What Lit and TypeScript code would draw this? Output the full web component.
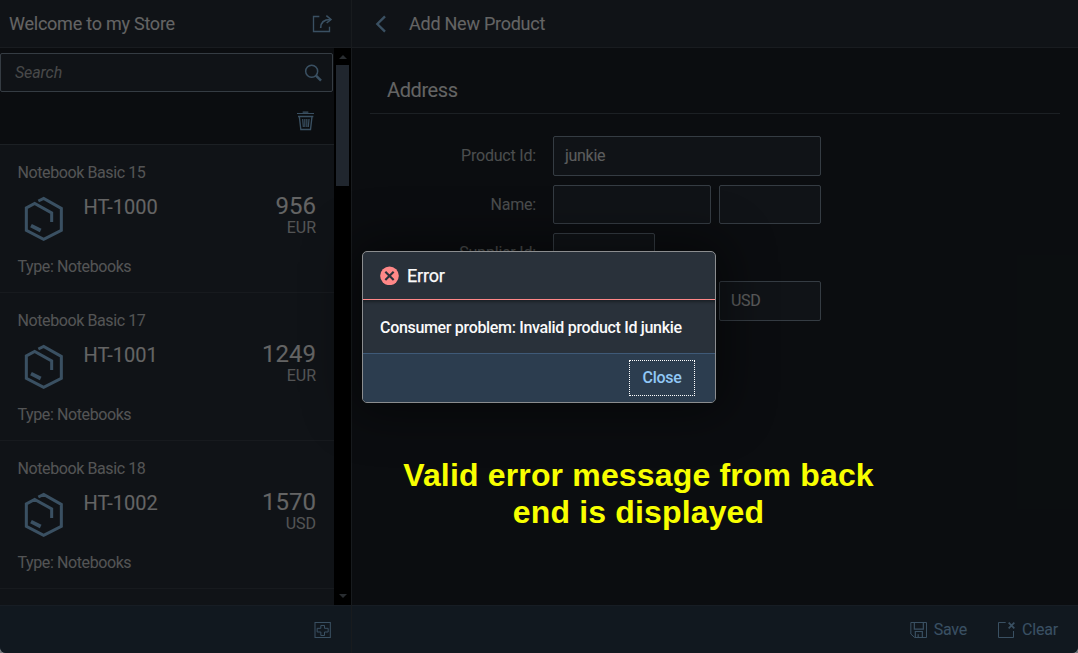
import { LitElement, html, css, svg } from "lit";
import { customElement } from "lit/decorators.js";

interface Product {
  name: string;
  id: string;
  price: string;
  currency: string;
}

const products: Product[] = [
  { name: "Notebook Basic 15", id: "HT-1000", price: "956", currency: "EUR" },
  { name: "Notebook Basic 17", id: "HT-1001", price: "1249", currency: "EUR" },
  { name: "Notebook Basic 18", id: "HT-1002", price: "1570", currency: "USD" },
];

const icon = (cls: string, w: number, h: number, box: string, body: unknown) =>
  html`<svg class="icon ${cls}" width=${w} height=${h} viewBox=${box}>${body}</svg>`;

const shareIcon = icon("share", 21, 19, "936 42 63 57", svg`
  <path d="M958 49.500H940.500V94.500H988.500V80" stroke-width="4"/>
  <path d="M962 84C962 68 972 58.500 991 58.500" stroke-width="5"/>
  <path d="M979 47L993 58.500L980 69" stroke-width="4.500"/>`);
const searchIcon = icon("search-glyph", 18, 18, "912 192 54 54", svg`
  <circle cx="935" cy="214" r="18" stroke-width="4.500"/>
  <path d="M948 227L963 242" stroke-width="7.500"/>`);
const trashIcon = icon("trash", 19, 20, "888 333 57 60", svg`
  <path d="M891 340.500H942M908 336.500H925" stroke-width="3.500"/>
  <path d="M894 349.500H940M898 350L902.500 388.500H931.500L936 350" stroke-width="4"/>
  <path d="M908 357L910 381M914.500 357V381M920.500 357V381M927 357L925 381" stroke-width="3.500"/>`);
const addIcon = icon("add", 17, 18, "942 543 51 54", svg`
  <rect x="945" y="547.500" width="46" height="45" stroke-width="3"/>
  <path d="M962.500 556.500H973.500V565H984.500V576H973.500V586.500H962.500V576H951.500V565H962.500Z" stroke-width="3"/>`);
const backIcon = icon("back", 11, 18, "75 45 33 54", svg`
  <path d="M105 49L82 72L105 95" stroke-width="7"/>`);
const saveIcon = icon("save", 18, 18, "90 93 54 54", svg`
  <path d="M92.500 97.500H139.500V142.500H104L92.500 132Z" stroke-width="3"/>
  <path d="M103 97V117.500H130V97M106 142V124.500H127V142M114.500 142V132.500" stroke-width="3.500"/>`);
const clearIcon = icon("clear", 19, 18, "351 93 57 54", svg`
  <path d="M377 97.500H355.500V142.500H400.500V123" stroke-width="3"/>
  <path d="M386 98L403 115M403 98L386 115" stroke-width="5"/>`);
const productIcon = icon("product", 40, 46, "72 153 120 138", svg`
  <path d="M115 168L131 160.500L184 190V256L131 283L79 256V189L104 175.500L155 203.500V231" stroke-width="9"/>
  <path d="M93 242L122 256.500" stroke-width="11"/>`);
const errorIcon = icon("error", 19, 19, "90 123 57 57", svg`
  <circle class="disc" cx="118.500" cy="152.500" r="28"/>
  <path class="cross" d="M106 140.500L131 165M131 140.500L106 165" stroke-width="6.500"/>`);

const shared = css`
  * { box-sizing: border-box; }
  .icon { display: block; fill: none; stroke: #91c8f6; flex: none; }
`;

@customElement("store-master")
class StoreMaster extends LitElement {
  static styles = [shared, css`
    :host { display: flex; flex-direction: column; width: 352px; border-right: 1px solid #3c444d; }
    .head { height: 48px; display: flex; align-items: center; justify-content: space-between;
      padding: 0 18px 0 9px; background: #29313a; border-bottom: 1px solid #3f4851; }
    .title { font-size: 18px; letter-spacing: -0.24px; }
    .body { flex: 1; display: flex; min-height: 0; }
    .list { width: 334px; display: flex; flex-direction: column; overflow: hidden; }
    .search { margin-top: 5px; height: 39px; width: 333px; flex: none; display: flex; align-items: center;
      justify-content: space-between; padding: 0 10px 0 14px; background: #29313a;
      border: 1px solid #8696a9; border-radius: 2px; }
    .hint { font-style: italic; color: #b5b7b9; letter-spacing: -0.1px; padding-top: 1px; }
    .tools { height: 53px; flex: none; display: flex; justify-content: flex-end;
      padding: 19px 19px 0 0; border-bottom: 1px solid #48515b; }
    .item { height: 148px; flex: none; background: #29313a; border-bottom: 1px solid #3a434d;
      padding: 18px 18px 0 17.5px; display: flex; flex-direction: column; }
    .line { line-height: 20px; color: #d0d2d4; letter-spacing: -0.4px; }
    .row { height: 74px; display: flex; }
    .product { margin: 13px 0 0 6.5px; }
    .id { margin: 12px 0 0 19.5px; font-size: 20px; line-height: 24px; flex: 1; }
    .amount { display: flex; flex-direction: column; align-items: flex-end; padding-top: 10px; }
    .price { font-size: 24px; line-height: 26px; }
    .cur { line-height: 17px; color: #d0d2d4; }
    .rest { flex: 1; background: #29313a; }
    .bar { width: 17px; background: #000; display: flex; flex-direction: column; align-items: center; padding: 7px 0; }
    .up, .down { border: 4px solid transparent; }
    .up { border-top: 0; border-bottom-color: #66707c; }
    .down { border-bottom: 0; border-top-color: #66707c; margin-top: auto; }
    .thumb { width: 13px; height: 121px; margin-top: 6px; background: #505f73; }
    .foot { height: 48px; display: flex; justify-content: flex-end; padding: 15px 20px 0 0;
      background: #2c3d4f; border-top: 1px solid #3a495a; }
  `];

  render() {
    return html`
      <div class="head"><span class="title">Welcome to my Store</span>${shareIcon}</div>
      <div class="body">
        <div class="list">
          <div class="search"><span class="hint">Search</span>${searchIcon}</div>
          <div class="tools">${trashIcon}</div>
          ${products.map((p) => html`
            <div class="item">
              <div class="line">${p.name}</div>
              <div class="row">
                ${productIcon}
                <div class="id">${p.id}</div>
                <div class="amount"><span class="price">${p.price}</span><span class="cur">${p.currency}</span></div>
              </div>
              <div class="line">Type: Notebooks</div>
            </div>`)}
          <div class="rest"></div>
        </div>
        <div class="bar"><div class="up"></div><div class="thumb"></div><div class="down"></div></div>
      </div>
      <div class="foot">${addIcon}</div>`;
  }
}

@customElement("product-form")
class ProductForm extends LitElement {
  static styles = [shared, css`
    :host { display: flex; flex-direction: column; flex: 1; min-width: 0; }
    .head { height: 48px; display: flex; align-items: center; gap: 23px; padding-left: 23px;
      background: #29313a; border-bottom: 1px solid #3f4851; }
    .title { font-size: 18px; letter-spacing: -0.25px; }
    .body { flex: 1; padding: 24px 18px 0; }
    .section { height: 42px; padding-left: 17px; font-size: 20px; line-height: 36px; letter-spacing: -0.4px;
      border-bottom: 1px solid #48515b; }
    .form { display: grid; grid-template-columns: 166px 158px 102px; column-gap: 8px; padding-top: 22px;
      grid-template-rows: 49px 48px 48px 40px; }
    .label { text-align: right; line-height: 40px; color: #bcc0c3; letter-spacing: -0.2px; }
    .fields { grid-column: 2 / 4; display: flex; gap: 8px; padding-left: 9px; width: 277px; }
    .field { height: 40px; line-height: 38px; padding-left: 11px; background: #29313a; border: 1px solid #8696a9;
      border-radius: 2px; color: #e4e6e8; letter-spacing: -0.3px; }
    .short { height: 39px; }
    .full { width: 268px; } .mid { width: 158px; } .small { width: 102px; }
    .foot { height: 48px; display: flex; justify-content: flex-end; padding: 14px 20px 0 0; gap: 30px;
      background: #2c3d4f; border-top: 1px solid #3a495a; }
    .action { display: flex; gap: 6px; line-height: 20px; height: 20px; color: #91c8f6; letter-spacing: -0.2px; }
    .action .icon { margin-top: 1px; }
  `];

  render() {
    return html`
      <div class="head">${backIcon}<span class="title">Add New Product</span></div>
      <div class="body">
        <div class="section">Address</div>
        <div class="form">
          <div class="label">Product Id:</div>
          <div class="fields"><div class="field full">junkie</div></div>
          <div class="label">Name:</div>
          <div class="fields"><div class="field mid short"></div><div class="field small short"></div></div>
          <div class="label">Supplier Id:</div>
          <div class="fields"><div class="field small"></div></div>
          <div class="label"></div>
          <div class="fields"><div class="field mid"></div><div class="field small">USD</div></div>
        </div>
      </div>
      <div class="foot">
        <div class="action">${saveIcon}<span>Save</span></div>
        <div class="action">${clearIcon}<span>Clear</span></div>
      </div>`;
  }
}

@customElement("error-dialog")
class ErrorDialog extends LitElement {
  static styles = [shared, css`
    :host { display: flex; flex-direction: column; width: 354px; height: 152px; background: #29313a;
      border: 1px solid #8b8d8f; border-radius: 5px; overflow: hidden; box-sizing: border-box;
      box-shadow: 0 0 50px 10px rgba(0, 0, 0, 0.45); color: #fafafa; }
    .head { height: 48px; display: flex; align-items: center; gap: 8px; padding-left: 17px;
      border-bottom: 1px solid #ff8888; font-size: 18px; flex: none; letter-spacing: -0.2px; }
    .head span { -webkit-text-stroke: 0.25px #fafafa; }
    .disc { fill: #ff8888; stroke: none; }
    .cross { stroke: #29313a; }
    .text { height: 53px; flex: none; padding-left: 17px; line-height: 55px; font-weight: 500; letter-spacing: -0.32px;
      box-shadow: inset 0 3px 3px -1px rgba(0, 0, 0, 0.35); }
    .foot { flex: 1; padding: 6px 20px 0 0; display: flex; justify-content: flex-end;
      background: #2c3d4f; border-top: 1px solid #3f5a78; }
    .close { width: 66px; height: 36px; line-height: 34px; text-align: center; border: 1px dotted #fff;
      color: #91c8f6; font-weight: 500; letter-spacing: -0.3px; }
  `];

  render() {
    return html`
      <div class="head">${errorIcon}<span>Error</span></div>
      <div class="text">Consumer problem: Invalid product Id junkie</div>
      <div class="foot"><div class="close">Close</div></div>`;
  }
}

@customElement("app-root")
class AppRoot extends LitElement {
  static styles = [shared, css`
    :host { display: block; position: relative; width: 1078px; height: 653px; overflow: hidden;
      background: #77797d; font: 16px/20px Roboto, "Liberation Sans", sans-serif; color: #fafafa; }
    .page { display: flex; height: 653px; background: #1c2228; border-radius: 0 0 6px 6px; overflow: hidden; }
    .dim { position: absolute; inset: 0; background: rgba(0, 0, 0, 0.6); border-radius: 0 0 6px 6px; }
    .dialog { position: absolute; left: 362px; top: 251px; }
    .caption { position: absolute; left: 388px; top: 457px; width: 501px; text-align: center;
      font: bold 32px/37px "Liberation Sans", Arial, sans-serif; letter-spacing: 0.16px; color: #f8ff00; }
  `];

  render() {
    return html`
      <div class="page"><store-master></store-master><product-form></product-form></div>
      <div class="dim"></div>
      <error-dialog class="dialog"></error-dialog>
      <div class="caption">Valid error message from back<br />end is displayed</div>`;
  }
}
